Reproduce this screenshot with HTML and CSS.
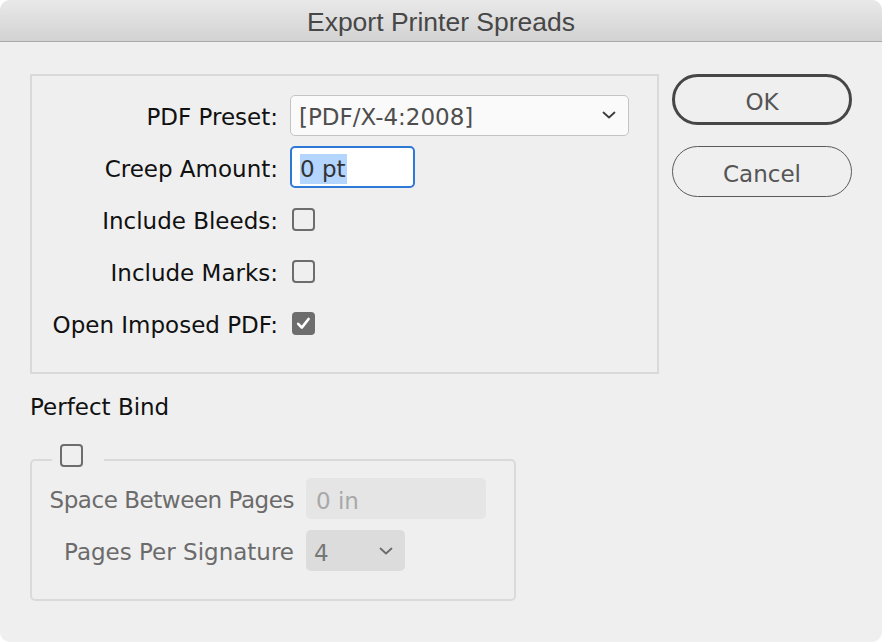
FILE: index.html
```html
<!DOCTYPE html>
<html lang="en">
<head>
<meta charset="utf-8">
<title>Export Printer Spreads</title>
<link rel="stylesheet" href="styles.css">
</head>
<body>
<div class="window">
  <div class="titlebar">Export Printer Spreads</div>
  <div class="content">
    <div class="main">
      <div class="group">
        <div class="label">PDF Preset:</div>
        <div class="select">
          <span class="txt">[PDF/X-4:2008]</span>
          <svg class="chev" width="14" height="8" viewBox="0 0 14 8"><path d="M1.5 1.5 L7 6.5 L12.5 1.5" fill="none" stroke="#3c3c3c" stroke-width="1.8" stroke-linecap="round" stroke-linejoin="round"/></svg>
        </div>
        <div class="label">Creep Amount:</div>
        <div class="input"><span class="sel">0 pt</span></div>
        <div class="label">Include Bleeds:</div>
        <div class="cb"></div>
        <div class="label">Include Marks:</div>
        <div class="cb"></div>
        <div class="label">Open Imposed PDF:</div>
        <div class="cb checked">
          <svg width="19" height="19" viewBox="0 0 19 19"><path d="M4.2 9.8 L7.8 13.6 L14.6 5" fill="none" stroke="#fff" stroke-width="2.6" stroke-linecap="round" stroke-linejoin="round"/></svg>
        </div>
      </div>
      <div class="heading">Perfect Bind</div>
      <fieldset class="bind">
        <legend class="bind-legend"><div class="cb"></div></legend>
        <div class="bind-grid">
          <div class="label dim tight">Space Between Pages</div>
          <div class="dinput"><span class="txt">0 in</span></div>
          <div class="label dim">Pages Per Signature</div>
          <div class="dselect">
            <span class="txt">4</span>
            <svg class="chev" width="14" height="8" viewBox="0 0 14 8"><path d="M1.5 1.5 L7 6.5 L12.5 1.5" fill="none" stroke="#6a6a6a" stroke-width="1.8" stroke-linecap="round" stroke-linejoin="round"/></svg>
          </div>
        </div>
      </fieldset>
    </div>
    <div class="buttons">
      <div class="btn default"><span class="txt">OK</span></div>
      <div class="btn"><span class="txt">Cancel</span></div>
    </div>
  </div>
</div>
</body>
</html>
```

FILE: styles.css
```css
html, body {
  margin: 0;
  padding: 0;
  background: #ffffff;
}
body {
  font-family: "DejaVu Sans", "Liberation Sans", sans-serif;
  font-size: 23px;
  color: #111;
}
.window {
  width: 882px;
  height: 642px;
  background: #efefef;
  border-radius: 10px;
  overflow: hidden;
  box-sizing: border-box;
}
.titlebar {
  height: 42px;
  box-sizing: border-box;
  border-bottom: 1px solid #a9a9a9;
  background: linear-gradient(#e9e9e9, #d2d2d2);
  text-align: center;
  font-family: "Liberation Sans", Arial, sans-serif;
  font-size: 26.5px;
  padding-top: 4px;
  line-height: 37px;
  color: #474747;
}
.content {
  display: flex;
  padding: 32px 0 0 30px;
  gap: 13px;
}
.main {
  width: 629px;
  display: flex;
  flex-direction: column;
}
.group {
  box-sizing: border-box;
  height: 300px;
  border: 2px solid #d9d9d9;
  padding: 13px 0 0 0;
  display: grid;
  grid-template-columns: 246px 1fr;
  grid-auto-rows: 52px;
  column-gap: 12px;
  align-items: center;
}
.label {
  text-align: right;
  white-space: nowrap;
  color: #111;
  padding-top: 3px;
}
.txt {
  position: relative;
  top: 2px;
}
.select {
  width: 339px;
  height: 41px;
  box-sizing: border-box;
  border: 1px solid #c4c4c4;
  border-radius: 5px;
  background: #fafafa;
  display: flex;
  align-items: center;
  justify-content: space-between;
  padding: 0 12px 0 8px;
  color: #4e4e4e;
}
.input {
  width: 125px;
  height: 42px;
  box-sizing: border-box;
  border: 2px solid #2f79d6;
  border-radius: 5px;
  background: #ffffff;
  display: flex;
  align-items: center;
  padding-left: 8px;
  padding-top: 3px;
  color: #333;
}
.sel {
  background: #b4d5fe;
  line-height: 30px;
  padding-right: 1px;
}
.cb {
  width: 23px;
  height: 23px;
  box-sizing: border-box;
  border: 2px solid #6d6d6d;
  border-radius: 4px;
  margin-left: 2px;
  display: flex;
  align-items: center;
  justify-content: center;
}
.cb.checked {
  background: #6d6d6d;
}
.heading {
  margin-top: 18px;
  line-height: 30px;
  height: 30px;
  color: #111;
}
.bind {
  width: 486px;
  box-sizing: border-box;
  margin: 22px 0 0 0;
  border: 2px solid #dadada;
  border-radius: 5px;
  padding: 0 0 28px 0;
  min-width: 0;
}
.bind-legend {
  margin-left: 20px;
  padding: 0 21px 8px 8px;
}
.bind-legend .cb {
  margin-left: 0;
}
.bind-grid {
  margin-top: 3px;
  display: grid;
  grid-template-columns: 262px auto;
  grid-auto-rows: 41px;
  column-gap: 12px;
  row-gap: 11px;
  align-items: center;
}
.label.dim {
  color: #6b6b6b;
}
.label.tight {
  letter-spacing: -0.45px;
}
.dinput {
  width: 180px;
  height: 41px;
  box-sizing: border-box;
  background: #e5e5e5;
  border-radius: 5px;
  padding-left: 10px;
  display: flex;
  align-items: center;
  color: #a8a8a8;
}
.dselect {
  width: 99px;
  height: 41px;
  box-sizing: border-box;
  background: #dcdcdc;
  border-radius: 5px;
  padding: 0 12px 0 8px;
  display: flex;
  align-items: center;
  justify-content: space-between;
  color: #777;
}
.buttons {
  display: flex;
  flex-direction: column;
  gap: 21px;
}
.btn {
  width: 180px;
  height: 51px;
  box-sizing: border-box;
  border: 1.5px solid #5a5a5a;
  border-radius: 26px;
  display: flex;
  align-items: center;
  justify-content: center;
  color: #555;
}
.btn.default {
  border: 3px solid #464646;
}
```
